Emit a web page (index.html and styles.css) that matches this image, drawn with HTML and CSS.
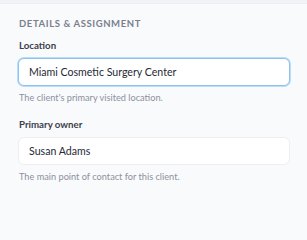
FILE: index.html
```html
<!DOCTYPE html>
<html>
<head>
<meta charset="utf-8">
<link rel="stylesheet" href="styles.css">
</head>
<body>
<div class="topbar"></div>
<section class="panel">
  <h2 class="section-title">DETAILS &amp; ASSIGNMENT</h2>
  <div class="field">
    <label class="label">Location</label>
    <div class="input focused">Miami Cosmetic Surgery Center</div>
    <p class="help">The client's primary visited location.</p>
  </div>
  <div class="field">
    <label class="label">Primary owner</label>
    <div class="input">Susan Adams</div>
    <p class="help">The main point of contact for this client.</p>
  </div>
</section>
</body>
</html>
```
FILE: styles.css
```css
html, body {
  margin: 0;
  padding: 0;
  background: #f9fafc;
  font-family: Lato, "Noto Sans", sans-serif;
  width: 307px;
  height: 240px;
  overflow: hidden;
}
.topbar {
  height: 3px;
  background: #f1f3f6;
  border-bottom: 1px solid #eceff3;
}
.panel {
  padding: 13px 17px 0 18px;
  display: flex;
  flex-direction: column;
  gap: 7px;
}
.section-title {
  margin: 0 0 0 1px;
  font-size: 9.5px;
  font-weight: 700;
  letter-spacing: 0.6px;
  color: #7a7f8c;
  line-height: 14px;
}
.field {
  display: flex;
  flex-direction: column;
}
.field + .field {
  margin-top: 6px;
}
.label {
  font-size: 9.7px;
  font-weight: 700;
  color: #3c404b;
  line-height: 14px;
  margin: 0 0 6px 1px;
}
.input {
  height: 28px;
  box-sizing: border-box;
  border: 1px solid #eceef2;
  border-radius: 6px;
  background: #fff;
  padding: 0 10px;
  font-size: 10.6px;
  color: #252934;
  display: flex;
  align-items: center;
}
.input.focused {
  border-color: #8ec3f0;
  box-shadow: 0 0 0 1px #b9dcf7;
}
.help {
  margin: 6px 0 0 1px;
  font-size: 9.2px;
  color: #8c919c;
  line-height: 12px;
}
```
